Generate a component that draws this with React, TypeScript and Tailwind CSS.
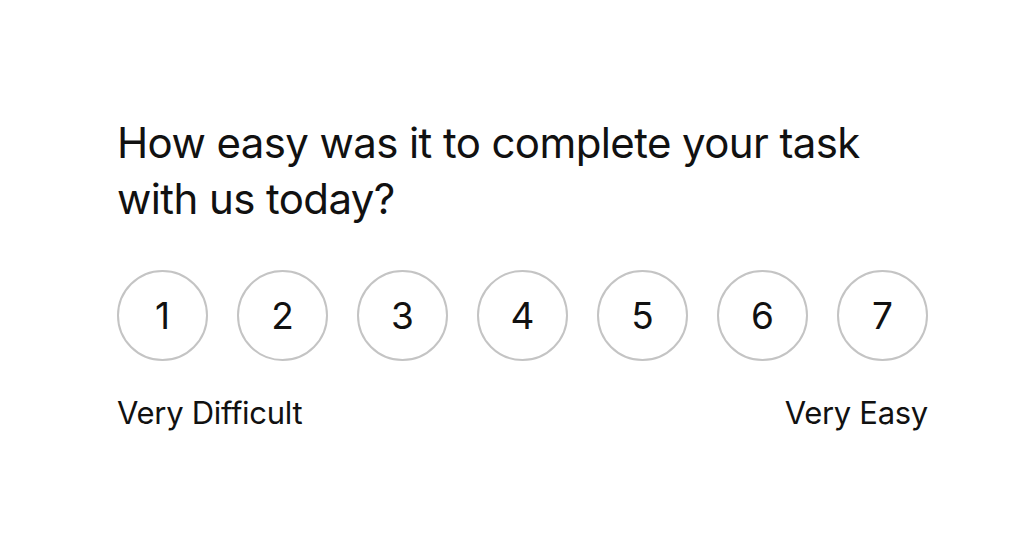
import React, { useState } from "react";

const scale = [1, 2, 3, 4, 5, 6, 7];

function RatingButton({ value, selected, onSelect }) {
  return (
    <button
      onClick={() => onSelect(value)}
      className={`flex h-[91px] w-[91px] items-center justify-center rounded-full border-2 text-[37px] ${
        selected ? "border-[#111] bg-[#111] text-white" : "border-[#c4c4c4] bg-white text-[#111]"
      }`}
    >
      {value}
    </button>
  );
}

export default function App() {
  const [rating, setRating] = useState(null);

  return (
    <div className="min-h-[554px] w-full bg-white font-['Inter',sans-serif] text-[#111]">
      <div className="w-[811px] pl-[117px] pt-[115px] box-content">
        <h1 className="text-[42px] leading-[56px] tracking-[-0.6px]">
          How easy was it to complete your task
          <br />
          with us today?
        </h1>
        <div className="mt-[43px] flex gap-[29px]">
          {scale.map((n) => (
            <RatingButton key={n} value={n} selected={rating === n} onSelect={setRating} />
          ))}
        </div>
        <div className="mt-[29px] flex justify-between text-[31px] leading-[46px] tracking-[-0.3px]">
          <span>Very Difficult</span>
          <span>Very Easy</span>
        </div>
      </div>
    </div>
  );
}
